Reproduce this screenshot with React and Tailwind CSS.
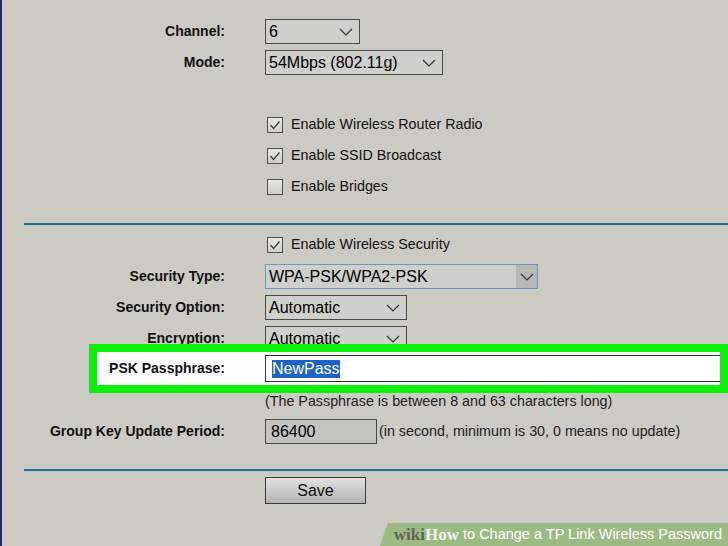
import React from "react";

const font = { fontFamily: '"Liberation Sans", Arial, sans-serif' };

// small chevron used by the windows-style selects
const Chevron = () => (
  <svg width="14" height="8" viewBox="0 0 14 8" className="shrink-0">
    <path d="M1 1 L7 7 L13 1" fill="none" stroke="#333" strokeWidth="1.2" />
  </svg>
);

const Select = ({ value, width, active }) => (
  <div
    className={`flex h-[25px] items-center justify-between border ${
      active ? "border-[#6f93c4]" : "border-[#4a4a48]"
    } bg-[#cfcfcb] pl-[3px] text-[16px] text-black`}
    style={{ width }}
  >
    <span className="leading-none">{value}</span>
    {active ? (
      <span className="flex h-full w-[21px] items-center justify-center bg-[#b8b8b4]">
        <Chevron />
      </span>
    ) : (
      <span className="pr-[6px]">
        <Chevron />
      </span>
    )}
  </div>
);

const Checkbox = ({ checked, label }) => (
  <div className="flex h-[31px] items-center gap-[8px]">
    <span className="flex h-[16px] w-[16px] items-center justify-center border border-[#4f4f4d] bg-gradient-to-b from-[#e6e6e2] to-[#cdcdc9]">
      {checked && (
        <svg width="12" height="10" viewBox="0 0 12 10">
          <path d="M1.5 5 L4.5 8.5 L10.5 1.5" fill="none" stroke="#3a3a3a" strokeWidth="1.2" />
        </svg>
      )}
    </span>
    <span className="text-[14.3px] text-[#111]">{label}</span>
  </div>
);

const Row = ({ label, children, className = "" }) => (
  <div className={`grid grid-cols-[223px_1fr] items-center gap-x-[40px] ${className}`}>
    <span className="text-right text-[14px] font-bold text-[#111]">{label}</span>
    <div className="flex items-center">{children}</div>
  </div>
);

const Divider = ({ className = "" }) => (
  <div className={`ml-[22px] ${className}`}>
    <div className="h-[2px] bg-[#2b6d8a]" />
    <div className="h-px bg-[#a9cfd6]" />
  </div>
);

export default function App() {
  return (
    <div
      className="relative h-[546px] w-full overflow-hidden border-l-2 border-[#262a6b] bg-[#cbcac3]"
      style={font}
    >
      <div className="flex flex-col pt-[19px]">
        <Row label="Channel:">
          <Select value="6" width={95} />
        </Row>
        <Row label="Mode:" className="mt-[6px]">
          <Select value="54Mbps (802.11g)" width={178} />
        </Row>

        <div className="mt-[34px] flex flex-col pl-[265px]">
          <Checkbox checked label="Enable Wireless Router Radio" />
          <Checkbox checked label="Enable SSID Broadcast" />
          <Checkbox label="Enable Bridges" />
        </div>

        <Divider className="mt-[21px]" />

        <div className="mt-[3px] pl-[265px]">
          <Checkbox checked label="Enable Wireless Security" />
        </div>

        <Row label="Security Type:" className="mt-[4px]">
          <Select value="WPA-PSK/WPA2-PSK" width={273} active />
        </Row>
        <Row label="Security Option:" className="mt-[6px]">
          <Select value="Automatic" width={142} />
        </Row>
        <Row label="Encryption:" className="mt-[6px]">
          <Select value="Automatic" width={142} />
        </Row>

        {/* highlighted passphrase row */}
        <div className="relative z-10 -mt-[7px] ml-[87px] border-[8px] border-[#0cf00c] bg-[#fdfdfb]">
          <div className="grid h-[33px] grid-cols-[128px_1fr] items-center gap-x-[40px]">
            <span className="text-right text-[14px] font-bold text-[#111]">PSK Passphrase:</span>
            <div className="flex h-[27px] items-center border-y border-l border-[#333] bg-white pl-[6px] text-[16px]">
              <span className="bg-[#1e64c8] leading-[18px] text-white">NewPass</span>
            </div>
          </div>
        </div>

        <div className="pl-[263px] text-[14.3px] leading-[16px] text-[#222]">
          (The Passphrase is between 8 and 63 characters long)
        </div>

        <Row label="Group Key Update Period:" className="mt-[10px]">
          <div className="flex h-[25px] w-[112px] items-center border border-[#4a4a48] bg-[#c3c3bf] pl-[5px] text-[16px]">
            86400
          </div>
          <span className="pl-[2px] text-[14.3px] text-[#222]">
            (in second, minimum is 30, 0 means no update)
          </span>
        </Row>

        <Divider className="mt-[25px]" />

        <div className="mt-[5px] pl-[263px]">
          <button className="h-[27px] w-[101px] border border-[#3a3a3a] bg-gradient-to-b from-[#e2e2e0] to-[#b4b4b2] text-[16px] text-[#111]">
            Save
          </button>
        </div>
      </div>

      {/* wikiHow watermark */}
      <div className="absolute bottom-0 right-0 flex h-[23px] items-center whitespace-nowrap bg-[#9dba84] pl-[14px] pr-[6px] [clip-path:polygon(8px_0,100%_0,100%_100%,0_100%)]">
        <span
          className="text-[17px] font-bold leading-none text-[#5c6656]"
          style={{ fontFamily: '"Liberation Serif", "DejaVu Serif", serif' }}
        >
          wiki
        </span>
        <span
          className="text-[17px] font-bold leading-none text-[#f4f7ef]"
          style={{ fontFamily: '"Liberation Serif", "DejaVu Serif", serif' }}
        >
          How
        </span>
        <span className="pl-[4px] text-[14.5px] leading-none text-white">
          to Change a TP Link Wireless Password
        </span>
      </div>
    </div>
  );
}
